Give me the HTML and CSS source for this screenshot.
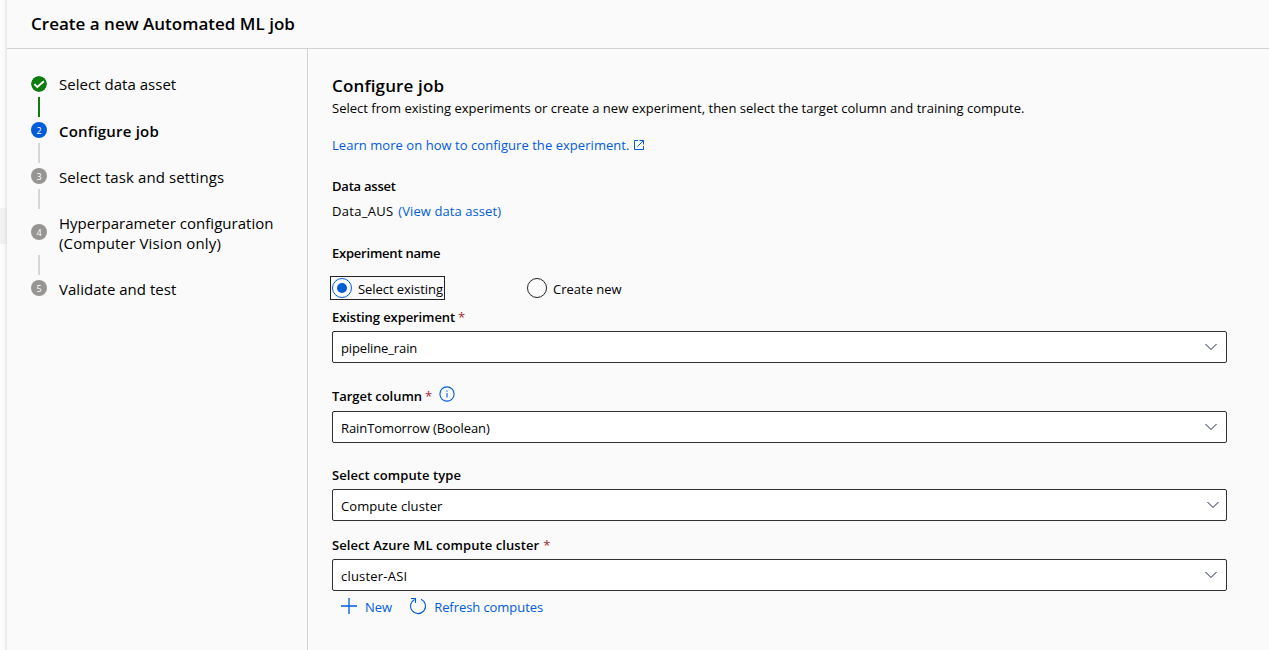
FILE: index.html
```html
<!DOCTYPE html>
<html lang="en">
<head>
<meta charset="utf-8">
<title>Create a new Automated ML job</title>
<link rel="stylesheet" href="styles.css">
</head>
<body>
<div class="app">
  <div class="rail"><div class="rail-tab"></div></div>
  <div class="panel">
    <header class="header"><h1 class="title">Create a new Automated ML job</h1></header>
    <div class="content">
      <nav class="steps">
        <div class="step done">
          <svg class="dot" viewBox="0 0 16 16"><circle cx="8" cy="8" r="8" fill="#107c10"/><path d="M3.3 8.2l3 2.8 6.6-5.8" fill="none" stroke="#fff" stroke-width="1.8"/></svg>
          <span class="step-label">Select data asset</span>
        </div>
        <div class="line line-done"></div>
        <div class="step current"><span class="dot">2</span><span class="step-label">Configure job</span></div>
        <div class="line"></div>
        <div class="step"><span class="dot">3</span><span class="step-label t-task">Select task and settings</span></div>
        <div class="line"></div>
        <div class="step step-tall"><span class="dot">4</span><span class="step-label">Hyperparameter configuration<br><span class="t-vision">(Computer Vision only)</span></span></div>
        <div class="line"></div>
        <div class="step"><span class="dot">5</span><span class="step-label">Validate and test</span></div>
      </nav>
      <main class="form">
        <h2 class="heading">Configure job</h2>
        <p class="desc">Select from existing experiments or create a new experiment, then select the target column and training compute.</p>
        <a class="learn">Learn more on how to configure the experiment.
          <svg class="ext" viewBox="0 0 12 12"><path d="M5 1.5H1.5v9h9V7M6.5 1.5h4v4M10.5 1.5L4.5 7.5" fill="none" stroke="currentColor"/></svg></a>
        <div class="label t-narrow asset-label">Data asset</div>
        <div class="asset"><span class="t-aus">Data_AUS</span><a class="t-view">(View data asset)</a></div>
        <div class="label t-narrow exp-label">Experiment name</div>
        <div class="radios">
          <label class="radio focused"><span class="ring on"></span><span class="t-slight">Select existing</span></label>
          <label class="radio"><span class="ring"></span><span>Create new</span></label>
        </div>
        <div class="label existing-label"><span class="t-existing">Existing experiment</span><span class="req">*</span></div>
        <div class="select"><span class="t-pipe">pipeline_rain</span><svg class="chev" viewBox="0 0 12 8"><path d="M.5 1L6 6.5 11.5 1"/></svg></div>
        <div class="label target-label"><span class="t-slight">Target column</span><span class="req">*</span>
          <svg class="info" viewBox="0 0 16 16"><circle cx="8" cy="8" r="7.1" fill="none" stroke="currentColor" stroke-width="1.1"/><path d="M8 7v4.5M8 4.5v1.2" stroke="currentColor" stroke-width="1.1"/></svg></div>
        <div class="select"><span class="t-rain">RainTomorrow (Boolean)</span><svg class="chev" viewBox="0 0 12 8"><path d="M.5 1L6 6.5 11.5 1"/></svg></div>
        <div class="label type-label t-wide">Select compute type</div>
        <div class="select select-type"><span class="t-view">Compute cluster</span><svg class="chev" viewBox="0 0 12 8"><path d="M.5 1L6 6.5 11.5 1"/></svg></div>
        <div class="label cluster-label"><span class="t-wide">Select Azure ML compute cluster</span><span class="req">*</span></div>
        <div class="select"><span class="t-asi">cluster-ASI</span><svg class="chev" viewBox="0 0 12 8"><path d="M.5 1L6 6.5 11.5 1"/></svg></div>
        <div class="actions">
          <a class="action"><svg class="plus" viewBox="0 0 16 16"><path d="M0 8h16M8 0v16" stroke="currentColor" stroke-width="1.3"/></svg><span>New</span></a>
          <a class="action action-refresh"><svg class="refresh" viewBox="0 0 18 18"><path d="M12 2.2A7.5 7.5 0 1 1 5.6 2.4M2 1.5H6.5V6" fill="none" stroke="currentColor" stroke-width="1.1"/></svg><span class="t-refresh">Refresh computes</span></a>
        </div>
      </main>
    </div>
  </div>
</div>
</body>
</html>
```

FILE: styles.css
```css
* { box-sizing: border-box; }
body {
  margin: 0;
  background: #fafafa;
  color: #000;
  font: 13px/20px "Open Sans", "Noto Sans", sans-serif;
}
h1, h2, p { margin: 0; }
a { color: #015cda; text-decoration: none; }
svg { display: block; }

.app { display: flex; height: 650px; overflow: hidden; }
.rail {
  width: 7px;
  padding-top: 208px;
  background: linear-gradient(to right, #fdfdfd 0, #fafafa 4px, #e6e6e6 7px);
}
.rail-tab { height: 36px; background: linear-gradient(to right, #f3f3f3 0, #f0f0f0 4px, #e0e0e0 7px); }
.panel { flex: 1; display: flex; flex-direction: column; }
.header { height: 49px; padding: 12px 24px 0; border-bottom: 1px solid #d2d2d2; }
.title { font-size: 17px; line-height: 24px; font-weight: 600; letter-spacing: .01px; }
.content { flex: 1; display: flex; }

.steps { width: 301px; padding: 27px 0 0 24px; border-right: 1px solid #d2d2d2; }
.step { display: flex; align-items: center; gap: 12px; height: 16px; }
.step-tall { height: 36px; }
.dot {
  flex: none;
  width: 16px;
  height: 16px;
  border-radius: 50%;
  background: #979593;
  color: #fff;
  font-size: 9px;
  line-height: 17px;
  text-align: center;
}
.done .dot { background: none; }
.current .dot { background: #015cda; }
.step-label { font-size: 15px; letter-spacing: .025px; white-space: nowrap; padding-top: 1px; }
.done .step-label { padding-top: 0; }
.current .step-label { font-weight: 600; letter-spacing: .2px; padding-top: 2px; }
.step .t-task { letter-spacing: .091px; padding-top: 2px; }
.step-tall .step-label { padding-top: 2px; }
.t-vision { letter-spacing: .15px; }
.line { width: 2px; height: 20px; margin: 5px 0 5px 7px; background: #d6d6d6; }
.line-done { background: #107c10; }

.form { flex: 1; padding: 25px 42px 0 24px; }
.heading { font-size: 17px; line-height: 24px; font-weight: 600; letter-spacing: .15px; }
.desc { letter-spacing: .018px; }
.learn { display: flex; align-items: center; gap: 4px; margin-top: 17px; letter-spacing: .046px; }
.ext { width: 12px; height: 12px; }
.label { display: flex; height: 20px; font-weight: 600; }
.req { margin-left: 4px; color: #a4262c; font-weight: 400; }
.asset-label { margin-top: 21px; }
.asset { display: flex; gap: 5px; margin-top: 5px; }
.exp-label { margin-top: 22px; }

.radios { display: flex; gap: 80px; margin: 13px 0 7px -2px; }
.radio { display: flex; align-items: center; gap: 6px; height: 24px; padding: 0 1px; border: 1px solid transparent; }
.focused { width: 115px; border-color: #222; white-space: nowrap; }
.ring { flex: none; display: grid; place-items: center; width: 20px; height: 20px; border: 1px solid #222; border-radius: 50%; background: #fff; }
.radio .ring + span { padding-top: 2px; }
.ring.on { border-color: #015cda; }
.ring.on::after { content: ""; width: 10px; height: 10px; border-radius: 50%; background: #015cda; }

.select {
  display: flex;
  justify-content: space-between;
  height: 32px;
  margin-top: 4px;
  padding: 6px 9px 0 8px;
  border: 1px solid #323130;
  border-radius: 2px;
  background: #fff;
}
.select-type { padding-right: 7px; }
.chev { width: 12px; height: 8px; margin-top: 5px; fill: none; stroke: #1b2350; stroke-width: 1; }
.target-label { margin-top: 23px; margin-bottom: 5px; }
.target-label .req, .existing-label .req { margin-left: 3px; }
.info { width: 16px; height: 16px; margin-left: 7px; color: #015cda; }
.type-label { margin-top: 22px; }
.cluster-label { margin-top: 14px; }

.actions { display: flex; gap: 17px; margin-top: 6px; padding-left: 9px; }
.action { display: flex; gap: 8px; }
.action-refresh { gap: 7px; }
.plus { width: 16px; height: 16px; margin-top: 1px; }
.refresh { width: 18px; height: 18px; }

.t-narrow { letter-spacing: -.22px; }
.t-aus { letter-spacing: .29px; }
.t-view { letter-spacing: .08px; }
.t-slight { letter-spacing: -.055px; }
.t-pipe { letter-spacing: -.13px; }
.t-refresh { letter-spacing: -.07px; }
.t-existing { letter-spacing: -.089px; }
.t-rain { letter-spacing: -.09px; }
.t-wide { letter-spacing: .08px; }
.t-asi { letter-spacing: .2px; }
```
